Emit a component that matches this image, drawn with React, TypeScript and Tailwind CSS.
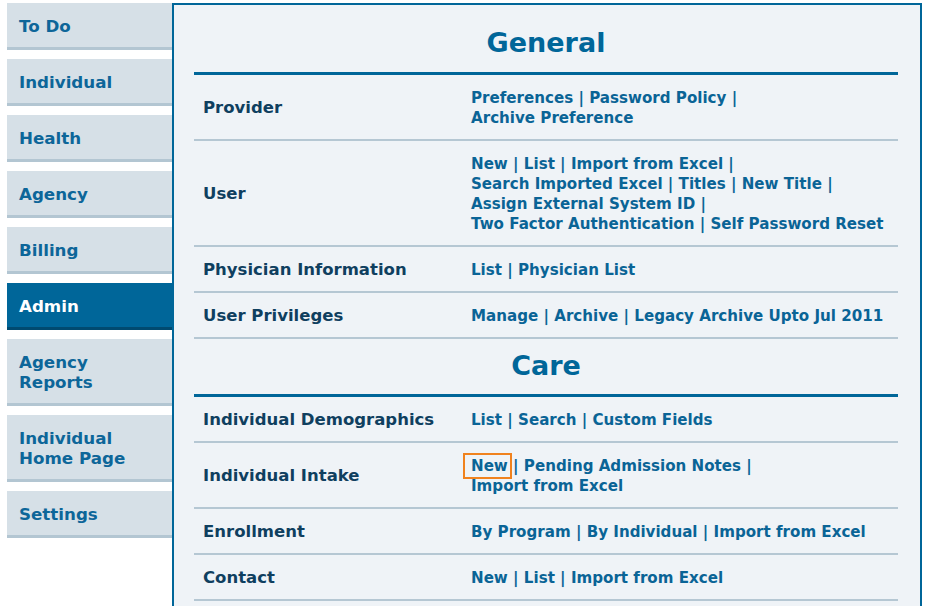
const navItems = [
  { label: "To Do" },
  { label: "Individual" },
  { label: "Health" },
  { label: "Agency" },
  { label: "Billing" },
  { label: "Admin", active: true },
  { label: "Agency Reports", lines: ["Agency", "Reports"] },
  { label: "Individual Home Page", lines: ["Individual", "Home Page"] },
  { label: "Settings" },
];

type Row = { label: string; links: string[][]; highlight?: string };

const sections: { title: string; rows: Row[] }[] = [
  {
    title: "General",
    rows: [
      { label: "Provider", links: [["Preferences", "Password Policy", ""], ["Archive Preference"]] },
      {
        label: "User",
        links: [
          ["New", "List", "Import from Excel", ""],
          ["Search Imported Excel", "Titles", "New Title", ""],
          ["Assign External System ID", ""],
          ["Two Factor Authentication", "Self Password Reset"],
        ],
      },
      { label: "Physician Information", links: [["List", "Physician List"]] },
      { label: "User Privileges", links: [["Manage", "Archive", "Legacy Archive Upto Jul 2011"]] },
    ],
  },
  {
    title: "Care",
    rows: [
      { label: "Individual Demographics", links: [["List", "Search", "Custom Fields"]] },
      {
        label: "Individual Intake",
        links: [["New", "Pending Admission Notes", ""], ["Import from Excel"]],
        highlight: "New",
      },
      { label: "Enrollment", links: [["By Program", "By Individual", "Import from Excel"]] },
      { label: "Contact", links: [["New", "List", "Import from Excel"]] },
    ],
  },
];

function LinkLine({ items, highlight }: { items: string[]; highlight?: string }) {
  return (
    <div className="whitespace-nowrap">
      {items.map((item, i) => (
        <span key={i}>
          {i > 0 && <span> | </span>}
          {item &&
            (item === highlight ? (
              <span className="outline-2 outline-[#f0821e] outline-offset-[2px] pl-[4px] -ml-[4px]">{item}</span>
            ) : (
              <span>{item}</span>
            ))}
        </span>
      ))}
    </div>
  );
}

export default function App() {
  return (
    <div
      className="w-[927px] h-[606px] overflow-hidden bg-white flex pt-[3px] pl-[7px] font-bold"
      style={{ fontFamily: '"DejaVu Sans", Verdana, sans-serif' }}
    >
      <nav className="w-[165px] flex flex-col gap-[9px] shrink-0 text-[16.7px]">
        {navItems.map((item) => (
          <div
            key={item.label}
            className={`px-[12px] pt-[2px] flex flex-col justify-center leading-[20px] border-b-[3px] ${
              item.lines ? "h-[67px]" : "h-[47px]"
            } ${
              item.active
                ? "bg-[#006699] border-[#004a70] text-white"
                : "bg-[#d6e0e7] border-[#b3c6d2] text-[#0d6699]"
            }`}
          >
            {(item.lines ?? [item.label]).map((l) => (
              <div key={l}>{l}</div>
            ))}
          </div>
        ))}
      </nav>

      <main className="flex-1 min-w-0 mr-[5px] h-[640px] border-2 border-[#006699] bg-[#eff3f7] pl-[20px] pr-[22px]">
        {sections.map((section, si) => (
          <section key={section.title}>
            <h2
              className={`text-center text-[27px] leading-none text-[#006699] border-b-[3px] border-[#006699] flex items-center justify-center ${
                si === 0 ? "h-[70px] pt-[8px]" : "h-[58px] pb-[3px]"
              }`}
            >
              {section.title}
            </h2>
            {section.rows.map((row) => (
              <div key={row.label} className="flex border-b-2 border-[#b5c7d3] leading-[20px] pt-[13px] pb-[11px]">
                <div className="w-[268px] shrink-0 pl-[9px] flex items-center text-[16.5px] text-[#0f3f5f]">
                  {row.label}
                </div>
                <div className="pl-[9px] text-[15.1px] text-[#0a6496]">
                  {row.links.map((line, li) => (
                    <LinkLine key={li} items={line} highlight={li === 0 ? row.highlight : undefined} />
                  ))}
                </div>
              </div>
            ))}
          </section>
        ))}
      </main>
    </div>
  );
}
